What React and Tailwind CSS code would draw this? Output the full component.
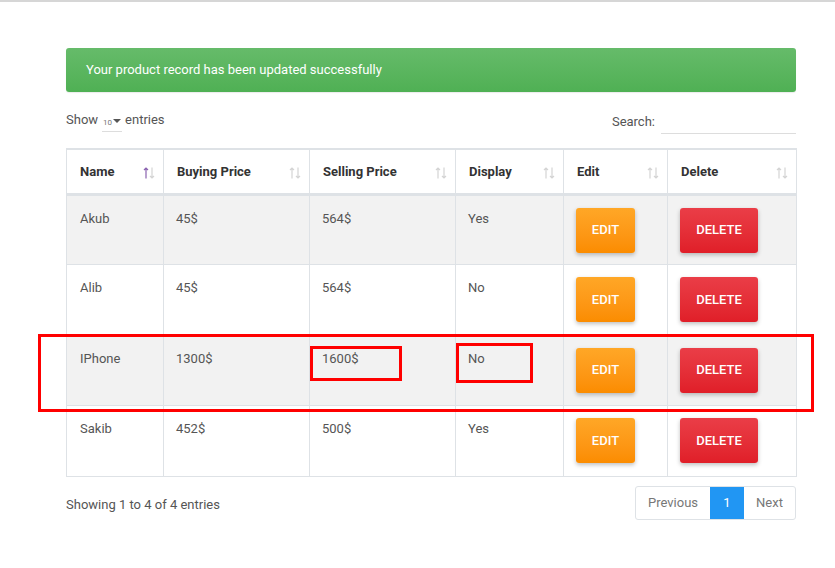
import React from 'react'

const rows = [
  { name: 'Akub', buy: '45$', sell: '564$', display: 'Yes' },
  { name: 'Alib', buy: '45$', sell: '564$', display: 'No' },
  { name: 'IPhone', buy: '1300$', sell: '1600$', display: 'No' },
  { name: 'Sakib', buy: '452$', sell: '500$', display: 'Yes' },
]

const cols = [
  ['Name', 'w-[97px]', true],
  ['Buying Price', 'w-[146px]', false],
  ['Selling Price', 'w-[146px]', false],
  ['Display', 'w-[108px]', false],
  ['Edit', 'w-[104px]', false],
  ['Delete', 'w-[129px]', false],
]

function SortIcon({ active }) {
  return (
    <svg className="absolute right-[8px] top-[17px]" width="12" height="12" viewBox="0 0 12 12" fill="none" strokeWidth="1.2">
      <path d="M3 11.5V1M1 3l2-2 2 2" stroke={active ? '#8a62b0' : '#d4d4d4'} />
      <path d="M9 0.5V11M7 9l2 2 2-2" stroke="#d4d4d4" />
    </svg>
  )
}

export default function App() {
  return (
    <div className="relative w-[835px] h-[568px] bg-white border-t-2 border-[#d6d6d6] font-['Roboto',sans-serif] text-[13px] text-[#555]">
      <div className="w-[730px] ml-[66px] pt-[46px]">
        {/* alert */}
        <div className="h-[44px] rounded-[3px] bg-gradient-to-b from-[#66bb6a] to-[#4fb054] text-white flex items-center px-[20px] shadow-[0_1px_1px_rgba(0,0,0,0.08)]">
          Your product record has been updated successfully
        </div>

        {/* controls */}
        <div className="flex justify-between items-start mt-[18px] h-[38px]">
          <div className="flex items-start text-[#555]">
            <span>Show</span>
            <span className="relative ml-[4px] w-[20px] h-[22px] border-b border-[#ddd] overflow-hidden">
              <span className="absolute left-[1px] top-[9px] text-[8px] leading-none text-[#777]">10</span>
              <span className="absolute left-[11px] top-[9px] w-0 h-0 border-x-[4px] border-x-transparent border-t-[4px] border-t-[#555]" />
            </span>
            <span className="ml-[3px]">entries</span>
          </div>
          <div className="flex items-start">
            <span className="mt-[2px]">Search:</span>
            <div className="ml-[6px] w-[135px] h-[22px] mt-[2px] border-b border-[#ddd]" />
          </div>
        </div>

        {/* table */}
        <table className="w-[730px] border-collapse table-fixed border-t-2 border-[#dee2e6]">
          <thead>
            <tr className="h-[45px]">
              {cols.map(([label, w, active]) => (
                <th key={label} className={`${w} relative text-left font-bold text-[#333] px-[13px] border-x border-[#dee2e6] border-b-[3px] border-b-[#dee2e6]`}>
                  {label}
                  <SortIcon active={active} />
                </th>
              ))}
            </tr>
          </thead>
          <tbody>
            {rows.map((r, i) => (
              <tr key={r.name} className={`h-[70.5px] ${i % 2 === 0 ? 'bg-[#f2f2f2]' : 'bg-white'}`}>
                <td className="align-top px-[13px] pt-[13px] border border-[#dee2e6]">{r.name}</td>
                <td className="align-top px-[12px] pt-[13px] border border-[#dee2e6]">{r.buy}</td>
                <td className="align-top px-[12px] pt-[13px] border border-[#dee2e6]">{r.sell}</td>
                <td className="align-top px-[12px] pt-[13px] border border-[#dee2e6]">{r.display}</td>
                <td className="align-top px-[12px] pt-[12px] border border-[#dee2e6]">
                  <button className="w-[59px] h-[45px] rounded-[3px] bg-gradient-to-b from-[#ffa726] to-[#fb8c00] text-white text-[13px] font-medium shadow-[0_2px_4px_rgba(0,0,0,0.25)]">
                    EDIT
                  </button>
                </td>
                <td className="align-top px-[12px] pt-[12px] border border-[#dee2e6]">
                  <button className="w-[78px] h-[45px] rounded-[3px] bg-gradient-to-b from-[#ea3d47] to-[#e01e28] text-white text-[13px] font-medium shadow-[0_2px_4px_rgba(0,0,0,0.25)]">
                    DELETE
                  </button>
                </td>
              </tr>
            ))}
          </tbody>
        </table>

        {/* footer */}
        <div className="flex justify-between items-start mt-[9px]">
          <div className="mt-[9px]">Showing 1 to 4 of 4 entries</div>
          <div className="flex h-[34px] border border-[#dee2e6] rounded-[3px] overflow-hidden">
            <span className="w-[74px] flex items-center justify-center text-[#777]">Previous</span>
            <span className="w-[34px] flex items-center justify-center bg-[#2196f3] text-white">1</span>
            <span className="w-[51px] flex items-center justify-center text-[#777]">Next</span>
          </div>
        </div>
      </div>

      {/* annotation boxes */}
      <div className="absolute left-[38px] top-[332px] w-[776px] h-[78px] border-[3px] border-[#ff0000]" />
      <div className="absolute left-[310px] top-[344px] w-[92px] h-[35px] border-[3px] border-[#ff0000]" />
      <div className="absolute left-[456px] top-[341px] w-[77px] h-[40px] border-[3px] border-[#ff0000]" />
    </div>
  )
}
